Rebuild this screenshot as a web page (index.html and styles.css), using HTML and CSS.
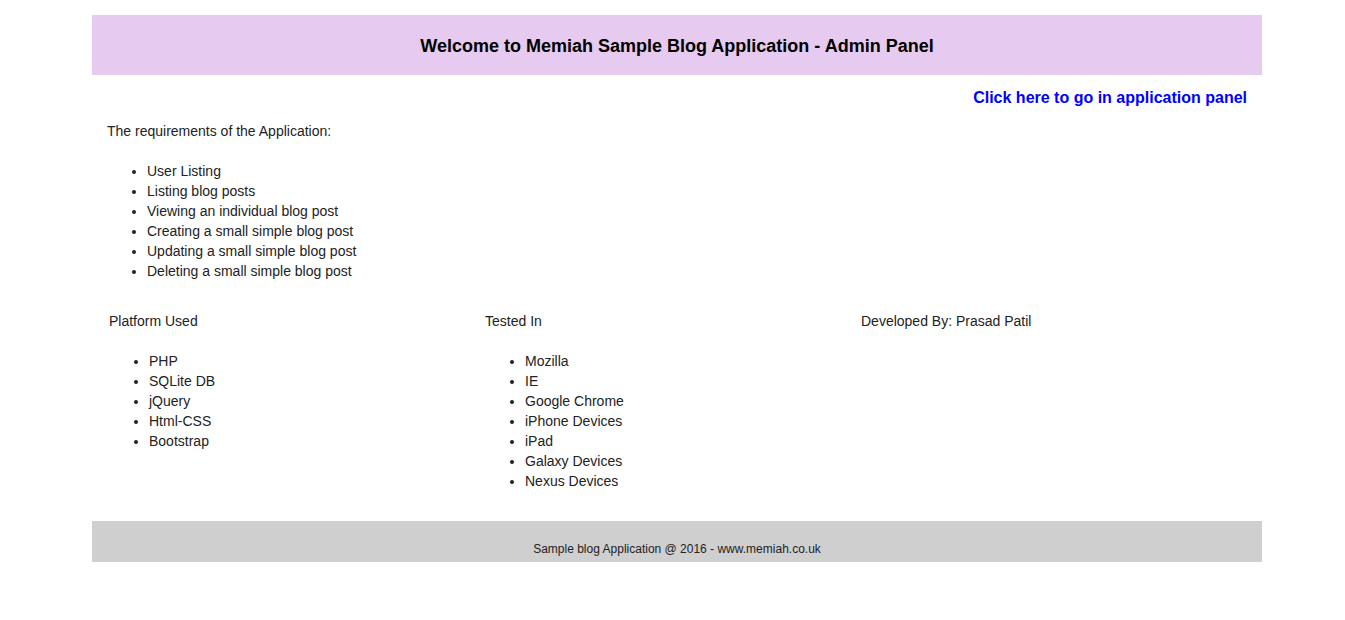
FILE: index.html
```html
<!DOCTYPE html>
<html>
<head>
<meta charset="utf-8">
<link rel="stylesheet" href="styles.css">
</head>
<body>
<div class="container">
  <header class="header"><h1 class="title">Welcome to Memiah Sample Blog Application - Admin Panel</h1></header>
  <div class="linkrow"><a class="applink" href="#">Click here to go in application panel</a></div>
  <section class="intro">
    <p class="lead">The requirements of the Application:</p>
    <ul class="list">
      <li>User Listing</li>
      <li>Listing blog posts</li>
      <li>Viewing an individual blog post</li>
      <li>Creating a small simple blog post</li>
      <li>Updating a small simple blog post</li>
      <li>Deleting a small simple blog post</li>
    </ul>
  </section>
  <section class="cols">
    <div class="col">
      <p class="lead">Platform Used</p>
      <ul class="list">
        <li>PHP</li>
        <li>SQLite DB</li>
        <li>jQuery</li>
        <li>Html-CSS</li>
        <li>Bootstrap</li>
      </ul>
    </div>
    <div class="col">
      <p class="lead">Tested In</p>
      <ul class="list">
        <li>Mozilla</li>
        <li>IE</li>
        <li>Google Chrome</li>
        <li>iPhone Devices</li>
        <li>iPad</li>
        <li>Galaxy Devices</li>
        <li>Nexus Devices</li>
      </ul>
    </div>
    <div class="col">
      <p class="lead">Developed By: Prasad Patil</p>
    </div>
  </section>
  <footer class="footer">Sample blog Application @ 2016 - www.memiah.co.uk</footer>
</div>
</body>
</html>
```
FILE: styles.css
```css
html, body { margin: 0; padding: 0; background: #fff; }
body { font-family: "Liberation Sans", Arial, sans-serif; font-size: 14px; line-height: 20px; color: #222; }
.container { width: 1170px; margin: 15px 0 0 92px; }
.header { background: #e6caf0; height: 60px; display: flex; align-items: center; justify-content: center; }
.title { margin: 2px 0 0; font-size: 18px; line-height: 22px; font-weight: bold; color: #000; }
.linkrow { margin-top: 13px; padding: 0 15px; text-align: right; line-height: 20px; }
.applink { color: #0000ff; font-weight: bold; font-size: 16px; text-decoration: none; }
.intro { padding: 0 15px; margin-top: 13px; }
.lead { margin: 0; }
.list { margin: 20px 0 0; padding-left: 40px; }
.cols { display: grid; grid-template-columns: 376px 376px 376px; padding-left: 17px; margin-top: 30px; }
.footer { margin-top: 30px; background: #cfcfcf; height: 41px; box-sizing: border-box; padding-top: 21px; text-align: center; font-size: 12px; line-height: 15px; color: #222; }
```
